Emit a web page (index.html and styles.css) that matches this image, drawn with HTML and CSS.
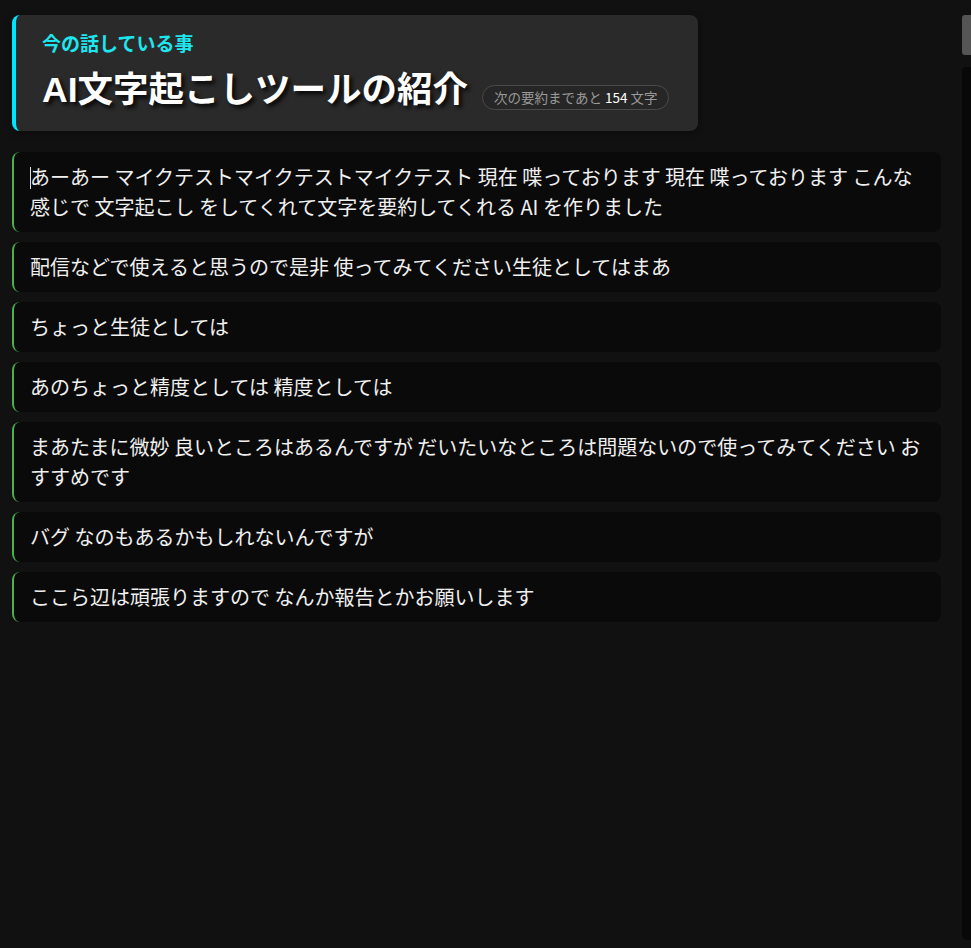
FILE: index.html
```html
<!DOCTYPE html>
<html lang="ja">
<head>
<meta charset="utf-8">
<title>文字起こし</title>
<link rel="stylesheet" href="styles.css">
</head>
<body>
<div class="page">
  <main class="main">
    <section class="topic">
      <div class="topic-label">今の話している事</div>
      <div class="topic-row">
        <h1 class="topic-title">AI文字起こしツールの紹介</h1>
        <span class="badge">次の要約まであと <b class="badge-num">154</b> 文字</span>
      </div>
    </section>
    <ul class="lines">
      <li class="line"><span class="caret"></span>あーあー マイクテストマイクテストマイクテスト 現在 喋っております 現在 喋っております こんな感じで 文字起こし をしてくれて文字を要約してくれる AI を作りました</li>
      <li class="line">配信などで使えると思うので是非 使ってみてください生徒としてはまあ</li>
      <li class="line">ちょっと生徒としては</li>
      <li class="line">あのちょっと精度としては 精度としては</li>
      <li class="line">まあたまに微妙 良いところはあるんですが だいたいなところは問題ないので使ってみてください おすすめです</li>
      <li class="line">バグ なのもあるかもしれないんですが</li>
      <li class="line">ここら辺は頑張りますので なんか報告とかお願いします</li>
    </ul>
  </main>
  <aside class="rail">
    <div class="rail-thumb"></div>
    <div class="rail-track"></div>
  </aside>
</div>
</body>
</html>
```
FILE: styles.css
```css
* { box-sizing: border-box; }
html, body { margin: 0; padding: 0; height: 100%; }
body {
  background: #111111;
  color: #f2f2f2;
  font-family: "Noto Sans CJK JP", "Noto Sans", sans-serif;
}
.page {
  display: flex;
  height: 948px;
}
.main {
  flex: 1;
  padding: 15px 21px 0 12px;
}
.topic {
  width: 686px;
  background: #2a2a2a;
  border-left: 4px solid #00e5ff;
  border-radius: 8px;
  padding: 15px 24px 17px 26px;
  box-shadow: 0 2px 6px rgba(0,0,0,0.4);
}
.topic-label {
  color: #1ee6ef;
  font-weight: bold;
  font-size: 19px;
  line-height: 26px;
}
.topic-row {
  display: flex;
  align-items: flex-end;
  gap: 14px;
  margin-top: 10px;
}
.topic-title {
  margin: 0;
  font-family: "Liberation Sans", "Noto Sans CJK JP", sans-serif;
  font-weight: bold;
  font-size: 35.5px;
  line-height: 48px;
  color: #ffffff;
  text-shadow: 3px 3px 4px rgba(0,0,0,0.85);
  white-space: nowrap;
}
.badge {
  margin-bottom: 4px;
  border: 1px solid #4a4a4a;
  border-radius: 13px;
  padding: 0 11px;
  height: 25px;
  line-height: 23px;
  font-size: 13.5px;
  color: #9a9a9a;
  background: #262626;
  white-space: nowrap;
}
.badge-num {
  color: #ffffff;
  font-weight: normal;
}
.lines {
  list-style: none;
  margin: 21px 0 0;
  padding: 0;
  display: flex;
  flex-direction: column;
  gap: 10px;
}
.line {
  background: #0a0a0a;
  border-left: 2px solid #4caf50;
  border-radius: 8px;
  padding: 10px 16px;
  font-size: 20px;
  line-height: 30px;
  color: #f0f0f0;
}
.caret {
  display: inline-block;
  width: 1px;
  height: 22px;
  background: #e0e0e0;
  vertical-align: -4px;
  margin-right: -1px;
}
.rail {
  width: 9px;
  display: flex;
  flex-direction: column;
}
.rail-thumb {
  margin-top: 15px;
  height: 40px;
  background: #555555;
  border-radius: 3px 0 0 3px;
}
.rail-track {
  flex: 1;
  margin-top: 12px;
  margin-bottom: 8px;
  background: #080808;
  border-radius: 4px 0 0 6px;
}
```
